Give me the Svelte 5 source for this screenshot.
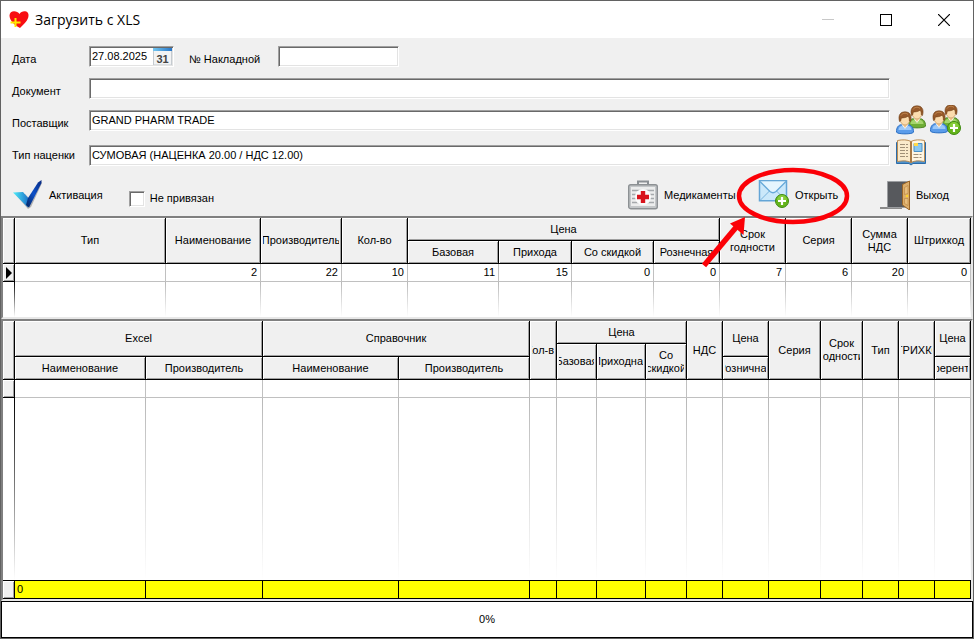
<script>
  let date = $state('27.08.2025');
  let invoice = $state('');
  let doc = $state('');
  let supplier = $state('GRAND PHARM TRADE');
  let markup = $state('СУМОВАЯ (НАЦЕНКА 20.00 / НДС 12.00)');
  let unbound = $state(false);

  const topCols = [12, 151, 95, 81, 66, 91, 73, 82, 66, 66, 66, 56, 63];
  const topRow = ['', '2', '22', '10', '11', '15', '0', '0', '7', '6', '20', '0'];
  const bottomCols = [12, 131, 117, 136, 131, 27, 40, 49, 41, 36, 46, 52, 42, 36, 36, 36];
  const bottomCells = Array.from({ length: 15 }, (_, i) => i);
</script>

{#snippet person(x, y, shirt, light, edge)}
  <g transform="translate({x} {y})">
    <path d="M.5 20C.5 15.500 2 13 6 12.500h5.500c4 .5 6 3 6 7.500 0 2.500-17 2.500-17 0z" fill={shirt} stroke={edge} />
    <path d="M2.500 18c.3-2.500 1.500-4 4-4.300l2.500 3 2.500-3c2.500.3 3.700 1.800 4 4.300z" fill={light} />
    <path d="M6 12.500l3 4 3-4-.5-3h-5z" fill="#f3c890" stroke="#fff" stroke-width=".8" />
    <ellipse cx="9" cy="7.500" rx="4.800" ry="5.500" fill="#fbdcae" stroke="#b98a50" stroke-width=".6" />
    <path d="M3.500 9.500C1.800 3 4.500-.2 9-.2s7.400 3.200 5.500 9.700l-1.300-1C13.600 6.500 13 5.200 12 4.200 9.500 6.200 7 5.500 5.200 6.200l-.4 2.500z" fill="#96592a" stroke="#704016" stroke-width=".6" />
    <path d="M5 3.500C6.500 1 10 .5 12 2.500" fill="none" stroke="#c58b52" />
  </g>
{/snippet}

{#snippet plus(x, y)}
  <g transform="translate({x} {y})">
    <circle r="6.500" fill="#64b41a" stroke="#3f8a12" />
    <path d="M-5 -1a5 5 0 0 1 10 0z" fill="#9bdc50" opacity=".6" />
    <path d="M-4 0H4M0-4V4" stroke="#fff" stroke-width="2.200" />
  </g>
{/snippet}

<div class="window">
  <header>
    <svg width="20" height="20" viewBox="0 0 20 20" aria-hidden="true">
      <path d="M11 18C5 15 .5 10 .5 5.500.5 0 8 0 10.500 4c2-4 9.500-4 9 1.500C19.500 10 15 14 11 18z" fill="#f80d12" />
      <path d="M6.500 8v9M1.500 12.500h10" stroke="#ffe900" stroke-width="2" />
    </svg>
    <h1>Загрузить с XLS</h1>
    <div class="controls">
      <button aria-label="Свернуть"><svg width="12" height="12"><path d="M0 5.500h12" stroke="#c8c8c8" /></svg></button>
      <button aria-label="Развернуть"><svg width="12" height="12"><rect x=".5" y=".5" width="11" height="11" fill="none" stroke="#000" /></svg></button>
      <button aria-label="Закрыть"><svg width="12" height="12"><path d="M0 0l12 12M12 0L0 12" stroke="#000" stroke-width="1.200" /></svg></button>
    </div>
  </header>

  <form onsubmit={(e) => e.preventDefault()}>
    <label for="date">Дата</label>
    <div class="pair">
      <div class="datebox">
        <input id="date" bind:value={date} />
        <button aria-label="Календарь" type="button">
          <svg width="19" height="17" viewBox="0 0 19 17">
            <defs><linearGradient id="cal"><stop stop-color="#74c7f0" /><stop offset="1" stop-color="#2876c8" /></linearGradient></defs>
            <path d="M.5 0h18v17H.5z" fill="#f2f3f4" stroke="#c5cbd0" />
            <path d="M0 0h19v3H0z" fill="url(#cal)" />
            <text x="9.500" y="15" text-anchor="middle" font-family="Liberation Sans, sans-serif" font-weight="bold" font-size="11" fill="#444">31</text>
          </svg>
        </button>
      </div>
      <label for="invoice">№ Накладной</label>
      <input id="invoice" class="short" bind:value={invoice} />
    </div>
    <span></span>

    <label for="doc">Документ</label>
    <input id="doc" bind:value={doc} />
    <span></span>

    <label for="supplier">Поставщик</label>
    <input id="supplier" bind:value={supplier} />
    <div class="side">
      <button aria-label="Поставщики" type="button">
        <svg width="30" height="31" viewBox="0 0 30 31">
          <g transform="translate(12 1)">{@render person(0, 0, '#6fae35', '#a5d56c', '#4e8623')}</g>
          {@render person(0, 7, '#5b9cea', '#9cc8f8', '#2a6fc4')}
        </svg>
      </button>
      <button aria-label="Добавить поставщика" type="button">
        <svg width="32" height="31" viewBox="0 0 32 31">
          {@render person(12, 0, '#6fae35', '#a5d56c', '#4e8623')}
          {@render person(0, 6, '#5b9cea', '#9cc8f8', '#2a6fc4')}
          {@render plus(24, 23)}
        </svg>
      </button>
      <button aria-label="Справочник наценок" type="button">
        <svg width="30" height="27" viewBox="0 0 30 27">
          <path d="M.5 3.500h29v21H17l-2 1.500-2-1.500H.5z" fill="#4c91cc" stroke="#2b6ba8" />
          <path d="M1.500 1.500c5-1 10-1 13.500 1v21c-4-2-8-2-13.500-1z" fill="#faeacb" stroke="#b98c55" />
          <path d="M28.500 1.500c-5-1-10-1-13.500 1v21c4-2 8-2 13.500-1z" fill="#fff6e2" stroke="#b98c55" />
          <path d="M15 2.500v21" stroke="#a87a45" stroke-width="2" />
          <path d="M4 5.500h8M4 8.500h8M4 11.500h8M4 14.500h8M4 17.500h8M17.500 15.500h8M17.500 18.500h8" stroke="#a09078" stroke-dasharray="5 1" />
          <path d="M18 4.500h8v8h-8z" fill="#8cc8ef" stroke="#4b91c7" />
          <path d="M18 4h4v3h-4z" fill="#ffd94a" />
        </svg>
      </button>
    </div>

    <label for="markup" class="last">Тип наценки</label>
    <input id="markup" bind:value={markup} />
  </form>

  <div class="toolbar">
    <button class="tool">
      <svg width="30" height="30" viewBox="0 0 30 30" aria-hidden="true">
        <defs>
          <linearGradient id="c1"><stop stop-color="#4ff0fa" /><stop offset="1" stop-color="#1b6ec8" /></linearGradient>
          <linearGradient id="c2" x1="1" y1="0" x2="0" y2="1"><stop stop-color="#0a2a80" /><stop offset=".5" stop-color="#0d50c8" /><stop offset="1" stop-color="#06245e" /></linearGradient>
        </defs>
        <path d="M3 15l9-1 5 5L28 2l1 1-11 24-3 2z" fill="#666" opacity=".45" />
        <path d="M0 12.500l10-.5 6 7-1 8.500z" fill="url(#c1)" />
        <path d="M13 25l2-7L25 2.500l3.500-2.500v3L16 27.500z" fill="url(#c2)" />
      </svg>
      Активация
    </button>
    <label class="check"><input type="checkbox" bind:checked={unbound} />Не привязан</label>
    <div class="actions">
      <button class="tool">
        <svg width="30" height="30" viewBox="0 0 30 30" aria-hidden="true">
          <path d="M10 5V1.500h10V5" fill="none" stroke="#8b9094" stroke-width="2" />
          <rect x=".7" y="4.700" width="28.600" height="24" rx="2" fill="#c4c7c9" stroke="#8d9194" stroke-width="1.400" />
          <rect x="3" y="7" width="24" height="19" fill="#eceded" />
          <path d="M4 10.500h22M4 14.500h22M4 18.500h22M4 22.500h22" stroke="#a5a9ac" stroke-width="1.300" />
          <circle cx="15" cy="17" r="8" fill="#fafafa" />
          <path d="M15 11v12M9 17h12" stroke="#d8131c" stroke-width="4.400" />
        </svg>
        Медикаменты
      </button>
      <button class="tool">
        <svg width="31" height="30" viewBox="0 0 31 30" aria-hidden="true">
          <path d="M1.500 .8h27v20h-27z" fill="#cbe8fa" stroke="#64a5d6" stroke-width="1.500" />
          <path d="M2.500 20l9-9M27.500 20l-9-9" stroke="#79b3dc" />
          <path d="M2 1.500l10 10q3 2.500 6 0l10-10" fill="#e5f5fe" stroke="#67a9d8" stroke-width="1.300" />
          {@render plus(24, 21)}
        </svg>
        Открыть
      </button>
      <button class="tool">
        <svg width="30" height="30" viewBox="0 0 30 30" aria-hidden="true">
          <path d="M0 28h22" stroke="#8a8a8a" stroke-width="2" />
          <path d="M7.500 1.500h21v26h-21z" fill="#57595d" stroke="#9b9da0" />
          <path d="M22.500 4.500L29.500 1v29l-7-5z" fill="#dcae6b" stroke="#9a6629" />
          <path d="M24.500 7.500l3.500-2v8l-3.500 1zM24.500 18.500H28v7l-3.500-2z" fill="#e7bd7d" stroke="#b88340" stroke-width=".6" />
          <circle cx="27" cy="16" r="1.300" fill="#ffd22b" />
        </svg>
        Выход
      </button>
    </div>
  </div>

  <div class="grid first">
    <table>
      <colgroup>{#each topCols as w}<col style="width:{w}px" />{/each}</colgroup>
      <thead>
        <tr class="h23">
          <th rowspan="2"></th>
          <th rowspan="2"><div>Тип</div></th>
          <th rowspan="2"><div>Наименование</div></th>
          <th rowspan="2"><div>Производитель</div></th>
          <th rowspan="2"><div>Кол-во</div></th>
          <th colspan="4"><div>Цена</div></th>
          <th rowspan="2"><div>Срок<br />годности</div></th>
          <th rowspan="2"><div>Серия</div></th>
          <th rowspan="2"><div>Сумма<br />НДС</div></th>
          <th rowspan="2"><div>Штрихкод</div></th>
        </tr>
        <tr class="h23">
          <th><div>Базовая</div></th>
          <th><div>Прихода</div></th>
          <th><div>Со скидкой</div></th>
          <th><div>Рознечная</div></th>
        </tr>
      </thead>
      <tbody>
        <tr class="data">
          <th><svg width="6" height="12" aria-hidden="true"><path d="M0 0l6 6-6 6z" /></svg></th>
          {#each topRow as v}<td>{v}</td>{/each}
        </tr>
        <tr class="fill"><td></td>{#each topRow as _}<td></td>{/each}</tr>
      </tbody>
    </table>
  </div>

  <div class="grid second">
    <table>
      <colgroup>{#each bottomCols as w}<col style="width:{w}px" />{/each}</colgroup>
      <thead>
        <tr class="h23">
          <th rowspan="3"></th>
          <th rowspan="2" colspan="2"><div>Excel</div></th>
          <th rowspan="2" colspan="2"><div>Справочник</div></th>
          <th rowspan="3"><div>Кол-во</div></th>
          <th colspan="3"><div>Цена</div></th>
          <th rowspan="3"><div>НДС</div></th>
          <th rowspan="2"><div>Цена</div></th>
          <th rowspan="3"><div>Серия</div></th>
          <th rowspan="3"><div>Срок<br />годности</div></th>
          <th rowspan="3"><div>Тип</div></th>
          <th rowspan="3"><div>ШТРИХКОД</div></th>
          <th rowspan="2"><div>Цена</div></th>
        </tr>
        <tr class="h13">
          <th rowspan="2"><div>Базовая</div></th>
          <th rowspan="2"><div>Приходная</div></th>
          <th rowspan="2"><div>Со<br />скидкой</div></th>
        </tr>
        <tr class="h23">
          <th><div>Наименование</div></th>
          <th><div>Производитель</div></th>
          <th><div>Наименование</div></th>
          <th><div>Производитель</div></th>
          <th><div>Розничная</div></th>
          <th><div>Референтная</div></th>
        </tr>
      </thead>
      <tbody>
        <tr class="data"><th></th>{#each bottomCells as _}<td></td>{/each}</tr>
        <tr class="fill"><td></td>{#each bottomCells as _}<td></td>{/each}</tr>
      </tbody>
      <tfoot>
        <tr><th></th>{#each bottomCells as i}<td>{i === 0 ? '0' : ''}</td>{/each}</tr>
      </tfoot>
    </table>
  </div>

  <div class="progress" role="progressbar" aria-valuenow="0" aria-label="Загрузка">0%</div>

  <svg class="callout" width="150" height="104" viewBox="0 0 150 104" aria-hidden="true">
    <ellipse cx="93" cy="30" rx="54" ry="26" fill="none" stroke="#fb0007" stroke-width="4.500" />
    <path d="M4 99.500L38 59" stroke="#fb0007" stroke-width="5.500" />
    <path d="M45 51L30 57.500 43.500 69z" fill="#fb0007" />
  </svg>
</div>

<style>
  :global(body) { margin: 0; }
  .window, .window * { box-sizing: border-box; }
  .window {
    position: relative;
    display: flex;
    flex-direction: column;
    height: 100vh;
    min-height: 480px;
    border: 1px solid #626262;
    background: #f0f0f0;
    color: #000;
    font: 11px/13px 'Liberation Sans', Arial, sans-serif;
  }
  button {
    padding: 0;
    border: 0;
    background: none;
    color: inherit;
    font: inherit;
  }
  svg { display: block; flex: none; }

  header {
    display: flex;
    flex: none;
    align-items: center;
    gap: 6px;
    height: 37px;
    padding-left: 8px;
    background: #fff;
  }
  h1 { margin: 0; font: 14px/20px 'Open Sans', 'Noto Sans', sans-serif; }
  .controls { display: flex; align-self: stretch; margin-left: auto; }
  .controls button { display: grid; place-items: center; width: 58px; }

  form {
    display: grid;
    grid-template-columns: 77px 1fr 83px;
    grid-template-rows: 32px 32px 35px 21px;
    align-items: start;
    padding: 8px 0 0 11px;
  }
  form label { padding-top: 7px; }
  form .last { padding-top: 4px; }
  input {
    width: 100%;
    height: 21px;
    margin: 0;
    padding: 0 2px 1px 1px;
    border: 1px solid;
    border-color: #a0a0a0 #fff #fff #a0a0a0;
    border-radius: 0;
    outline: 0;
    background: #fff;
    box-shadow: inset 1px 1px #696969, inset -1px -1px #e3e3e3;
    color: inherit;
    font: inherit;
    text-indent: 1px;
  }
  .pair { display: flex; align-items: start; }
  .pair > label { width: 104px; padding-left: 15px; }
  .pair .short { width: 121px; }
  .datebox { position: relative; width: 85px; }
  .datebox button { position: absolute; top: 2px; right: 2px; }
  .side {
    display: flex;
    flex-wrap: wrap;
    align-self: end;
    grid-row: 3 / 5;
    grid-column: 3;
    gap: 3px 4px;
    padding-left: 6px;
  }

  .toolbar {
    display: flex;
    flex: none;
    align-items: center;
    height: 50px;
    padding: 8px 0 0 12px;
  }
  .tool { display: flex; align-items: center; gap: 6px; white-space: nowrap; }
  .check { display: flex; align-items: center; gap: 5px; margin-left: 26px; padding-top: 7px; }
  .check input { width: 16px; height: 16px; padding: 0; appearance: none; }
  .actions { display: grid; grid-template-columns: 130px 122px 93px; margin-left: auto; }

  .grid {
    border: 2px solid;
    border-color: #808080 #e8e8e8 #e8e8e8 #808080;
    background: #fff;
  }
  .first { flex: none; height: 103px; }
  .second { flex: 1 1 0; min-height: 0; }
  table { width: 100%; height: 100%; table-layout: fixed; border-collapse: separate; border-spacing: 0; }
  th, td { padding: 0; overflow: hidden; font-weight: normal; }
  th {
    border: solid #000;
    border-width: 0 1px 1px 0;
    background: #f0f0f0;
    box-shadow: inset 1px 1px #fff, inset -1px -1px #a0a0a0;
  }
  th div {
    display: flex;
    justify-content: center;
    margin: 0 2px;
    overflow: hidden;
    text-align: center;
    white-space: nowrap;
  }
  .h23 { height: 23px; }
  .h13 { height: 13px; }
  .data { height: 18px; }
  .data td {
    padding-right: 3px;
    border: solid #c0c0c0;
    border-width: 0 1px 1px 0;
    text-align: right;
  }
  .data svg { margin-left: 3px; }
  .fill td { background: linear-gradient(#b8b8b8, #fff) right / 1px 100% no-repeat; }
  .fill td:first-child { background-image: linear-gradient(#000, #fff); }
  tfoot tr { height: 19px; }
  tfoot th, tfoot td { border: solid #000; border-width: 1px 1px 1px 0; }
  tfoot td { padding-left: 2px; background: #ff0; }

  .progress {
    display: grid;
    place-items: center;
    flex: none;
    height: 37px;
    border: 1px solid #000;
    background: #fff;
  }
  .callout { position: absolute; top: 165px; right: 123px; pointer-events: none; }
</style>
